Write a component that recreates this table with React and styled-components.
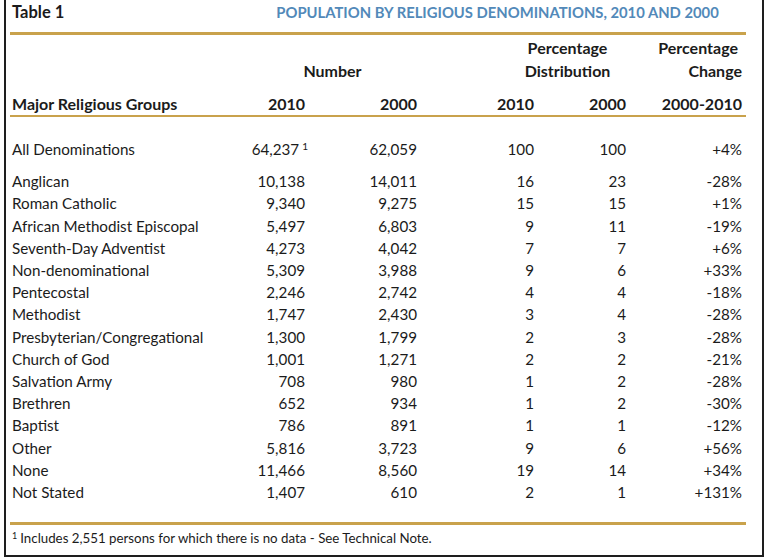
import React from "react";
import styled, { createGlobalStyle } from "styled-components";

const Global = createGlobalStyle`
  body {
    margin: 0;
    background: #ffffff;
    font-family: Lato, "Liberation Sans", sans-serif;
    color: #1b1b1b;
  }
`;

const cols = "230px 63px 112px 117px 92px 116px";

const Frame = styled.div`
  box-sizing: border-box;
  margin-left: 4px;
  width: 760px;
  height: 557px;
  border: 2px solid #1e1e1e;
  border-top: none;
  padding-left: 4px;
`;

const TitleBar = styled.div`
  display: flex;
  align-items: center;
  height: 24px;
  padding-left: 2px;
  font-weight: bold;
  font-size: 16.5px;
`;

const Caption = styled.span`
  margin-left: 212px;
  color: #5289b9;
  font-size: 14.8px;
`;

const Rule = styled.div`
  width: 736px;
  height: 2.5px;
  background: #c9a24c;
  margin-top: ${(p) => p.$top || 0}px;
`;

const Grid = styled.div`
  display: grid;
  grid-template-columns: ${cols};
  padding-left: 2px;
  font-size: 15.2px;
`;

const Head = styled(Grid)`
  font-weight: bold;
  font-size: 16px;
  grid-template-rows: 23px 23px 33px;
  padding-top: 1px;
  line-height: 23px;
`;

const HCell = styled.div`
  grid-column: ${(p) => p.$col};
  grid-row: ${(p) => p.$row};
  text-align: ${(p) => p.$align || "right"};
  padding-left: ${(p) => p.$pl || 0}px;
  padding-right: ${(p) => p.$pr || 0}px;
  align-self: ${(p) => (p.$end ? "end" : "start")};
`;

const Body = styled(Grid)`
  line-height: 22.2px;
  margin-top: ${(p) => p.$top}px;
`;

const Cell = styled.div`
  text-align: ${(p) => (p.$left ? "left" : "right")};
  white-space: nowrap;
  sup {
    font-size: 10px;
    line-height: 0;
    margin-left: 3px;
    margin-right: -3px;
    vertical-align: 5px;
  }
`;

const Note = styled.div`
  padding-left: 2px;
  margin-top: 5px;
  font-size: 13.3px;
  line-height: 16px;
  sup {
    font-size: 9px;
    line-height: 0;
    vertical-align: 4px;
    margin-right: 3px;
  }
`;

const total = ["All Denominations", "64,237", "62,059", "100", "100", "+4%"];

const rows = [
  ["Anglican", "10,138", "14,011", "16", "23", "-28%"],
  ["Roman Catholic", "9,340", "9,275", "15", "15", "+1%"],
  ["African Methodist Episcopal", "5,497", "6,803", "9", "11", "-19%"],
  ["Seventh-Day Adventist", "4,273", "4,042", "7", "7", "+6%"],
  ["Non-denominational", "5,309", "3,988", "9", "6", "+33%"],
  ["Pentecostal", "2,246", "2,742", "4", "4", "-18%"],
  ["Methodist", "1,747", "2,430", "3", "4", "-28%"],
  ["Presbyterian/Congregational", "1,300", "1,799", "2", "3", "-28%"],
  ["Church of God", "1,001", "1,271", "2", "2", "-21%"],
  ["Salvation Army", "708", "980", "1", "2", "-28%"],
  ["Brethren", "652", "934", "1", "2", "-30%"],
  ["Baptist", "786", "891", "1", "1", "-12%"],
  ["Other", "5,816", "3,723", "9", "6", "+56%"],
  ["None", "11,466", "8,560", "19", "14", "+34%"],
  ["Not Stated", "1,407", "610", "2", "1", "+131%"],
];

function Row({ data, mark }) {
  return data.map((v, i) => (
    <Cell key={i} $left={i === 0}>
      {v}
      {mark && i === 1 && <sup>1</sup>}
    </Cell>
  ));
}

export default function App() {
  return (
    <>
      <Global />
      <Frame>
        <TitleBar>
          Table 1
          <Caption>POPULATION BY RELIGIOUS DENOMINATIONS, 2010 AND 2000</Caption>
        </TitleBar>
        <Rule $top={8} />
        <Head>
          <HCell $col="4 / 6" $row="1" $align="center" $pl={92}>Percentage</HCell>
          <HCell $col="6" $row="1" $pr={4}>Percentage</HCell>
          <HCell $col="2 / 4" $row="2" $align="center" $pl={6}>Number</HCell>
          <HCell $col="4 / 6" $row="2" $align="center" $pl={92}>Distribution</HCell>
          <HCell $col="6" $row="2">Change</HCell>
          <HCell $col="1" $row="3" $align="left" $end>Major Religious Groups</HCell>
          <HCell $col="2" $row="3" $end>2010</HCell>
          <HCell $col="3" $row="3" $end>2000</HCell>
          <HCell $col="4" $row="3" $end>2010</HCell>
          <HCell $col="5" $row="3" $end>2000</HCell>
          <HCell $col="6" $row="3" $end>2000-2010</HCell>
        </Head>
        <Rule />
        <Body $top={21}>
          <Row data={total} mark />
        </Body>
        <Body $top={10}>
          {rows.map((r) => (
            <Row key={r[0]} data={r} />
          ))}
        </Body>
        <Rule $top={19} />
        <Note>
          <sup>1</sup>Includes 2,551 persons for which there is no data - See Technical Note.
        </Note>
      </Frame>
    </>
  );
}
